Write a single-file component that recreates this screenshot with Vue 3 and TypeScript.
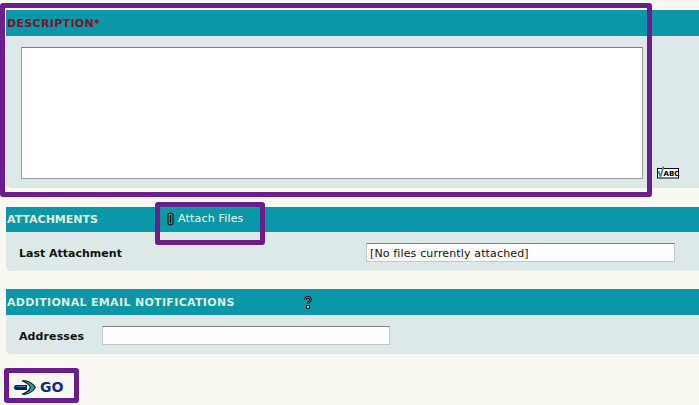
<script setup lang="ts">
const noFiles: string = '[No files currently attached]'
</script>

<template>
  <div class="page">
    <section class="panel first">
      <header class="bar bar-first"><h2 class="req">DESCRIPTION*</h2></header>
      <div class="body body-first">
        <textarea class="area" aria-label="Description"></textarea>
        <svg class="spell" width="24" height="14" viewBox="0 0 24 14" aria-hidden="true">
          <rect x="0.5" y="3.5" width="21" height="9.5" fill="#fff" stroke="#000" />
          <path d="M1.5 6 L3.5 11.5 L6.5 1.5" fill="none" stroke="#2e8f9c" stroke-width="1.8" />
          <text x="6.5" y="11" class="spell-text">ABC</text>
        </svg>
      </div>
    </section>

    <section class="panel second">
      <header class="bar bar-attach">
        <h2 class="title attach-title">ATTACHMENTS</h2>
        <a class="attach-link">
          <svg width="7" height="14" viewBox="0 0 7 14" aria-hidden="true">
            <path d="M1 3 V11 C1 13.6 6 13.6 6 11 V3 C6 .4 1 .4 1 3 Z" fill="#5f7f86" stroke="#10211f" stroke-width="1.2" />
            <path d="M3.5 3 V11" stroke="#0b1616" stroke-width="1.2" />
          </svg>
          <span class="attach-text">Attach Files</span>
        </a>
      </header>
      <div class="body row row-attach">
        <span class="label last-label">Last Attachment</span>
        <input class="field wide" :value="noFiles" readonly aria-label="Last Attachment" />
      </div>
    </section>

    <section class="panel third">
      <header class="bar bar-mail">
        <h2 class="title mail-title">ADDITIONAL EMAIL NOTIFICATIONS</h2>
        <svg class="help" width="8" height="13" viewBox="0 0 8 13" aria-label="Help">
          <path d="M1.5 3.5 C1.5 .6 6.5 .6 6.5 3.5 C6.5 5.5 4 5.5 4 8" fill="none" stroke="#06141a" stroke-width="2.6" />
          <path d="M1.5 3.5 C1.5 .6 6.5 .6 6.5 3.5 C6.5 5.5 4 5.5 4 8" fill="none" stroke="#5fb7bd" stroke-width="0.7" />
          <rect x="2.5" y="9.5" width="3" height="3" fill="#9fd0d0" stroke="#06141a" />
        </svg>
      </header>
      <div class="body row row-mail">
        <span class="label addr-label">Addresses</span>
        <input class="field addr" aria-label="Addresses" />
      </div>
    </section>

    <div class="go">
      <svg width="22" height="15" viewBox="0 0 22 15" aria-hidden="true">
        <path d="M8 .7 H11.5 C16 1.6 19.5 4.4 21.3 7.5 C19.5 10.6 16 13.4 11.5 14.3 H8 C12.5 12.6 15.6 10.4 16.4 7.5 C15.6 4.6 12.5 2.4 8 .7 Z" fill="#2f9f9f" stroke="#05222e" stroke-width="1.1" />
        <path d="M2 5 H13 V10 H2 C-.4 10 -.4 5 2 5 Z" fill="#05224f" />
        <path d="M2.5 6.5 H12" stroke="#3d6fc0" stroke-width="1.2" />
      </svg>
      <span class="go-text">GO</span>
    </div>

    <div class="mark mark-desc"></div>
    <div class="mark mark-attach"></div>
    <div class="mark mark-go"></div>
  </div>
</template>

<style>
html, body { margin: 0; background: #f9f8f1; }
</style>

<style scoped>
.page {
  position: relative;
  width: 699px;
  height: 405px;
  overflow: hidden;
  box-sizing: border-box;
  padding: 10px 0 0 6px;
  background: #f9f8f1;
  font-family: "DejaVu Sans", Verdana, sans-serif;
  font-size: 11px;
}
.panel { display: flex; flex-direction: column; }
.second { margin-top: 19px; }
.third { margin-top: 18px; }
.bar {
  display: flex;
  align-items: center;
  background: #0a98a8;
  box-sizing: border-box;
}
.bar-first { height: 26px; padding-left: 1px; }
.bar-attach { height: 25px; padding-left: 1px; }
.bar-mail { height: 26px; padding-left: 1px; }
h2 { margin: 0; font-size: 11px; font-weight: 700; line-height: 13px; }
.req { color: #7c1226; letter-spacing: 0.33px; }
.title { color: #dff0dc; }
.attach-title { width: 160px; }
.mail-title { width: 297px; letter-spacing: 0.33px; white-space: nowrap; }
.attach-link {
  display: flex;
  align-items: center;
  gap: 4px;
  margin-top: -2px;
  color: #f2f7f0;
  font-size: 11px;
}
.attach-text { letter-spacing: 0.18px; }
.help { margin-top: 1px; }
.body {
  background: #dde8e8;
  border-bottom-left-radius: 5px;
}
.body-first {
  position: relative;
  height: 152px;
  box-sizing: border-box;
  padding: 11px 0 0 15px;
}
.area {
  display: block;
  width: 622px;
  height: 132px;
  box-sizing: border-box;
  margin: 0;
  padding: 2px;
  resize: none;
  background: #fff;
  border: 1px solid #9a9d9d;
  border-top-color: #7d7f80;
  border-radius: 0;
}
.spell {
  position: absolute;
  left: 651px;
  top: 129px;
}
.spell-text {
  font-family: "DejaVu Sans", sans-serif;
  font-size: 7px;
  font-weight: 700;
  fill: #000;
}
.row { display: flex; align-items: center; color: #111; }
.row-attach { height: 39px; box-sizing: border-box; padding: 2px 0 0 13px; }
.row-mail { height: 39px; box-sizing: border-box; padding: 2px 0 0 13px; }
.label { font-weight: 700; font-size: 11px; color: #111; }
.last-label { width: 347px; margin-top: 2px; }
.addr-label { width: 83px; letter-spacing: 0.1px; margin-top: 2px; }
.field {
  box-sizing: border-box;
  height: 19px;
  margin: 0;
  padding: 1px 3px 0;
  background: #fff;
  border: 1px solid #c4c7c7;
  border-top-color: #7f8182;
  border-radius: 0;
  font-family: "DejaVu Sans", Verdana, sans-serif;
  font-size: 11px;
  letter-spacing: 0.14px;
  color: #111;
  outline: none;
}
.wide { width: 309px; }
.addr { width: 288px; }
.go {
  display: flex;
  align-items: center;
  gap: 4px;
  margin: 25px 0 0 8px;
}
.go-text {
  color: #0b2a86;
  font-size: 14px;
  font-weight: 700;
  line-height: 16px;
}
.mark {
  position: absolute;
  box-sizing: border-box;
  border: 5px solid #6a1e8c;
  border-radius: 3px;
  pointer-events: none;
}
.mark-desc { left: 0; top: 3px; width: 652px; height: 194px; }
.mark-attach { left: 155px; top: 202px; width: 110px; height: 43px; }
.mark-go { left: 4px; top: 368px; width: 75px; height: 35px; }
</style>
